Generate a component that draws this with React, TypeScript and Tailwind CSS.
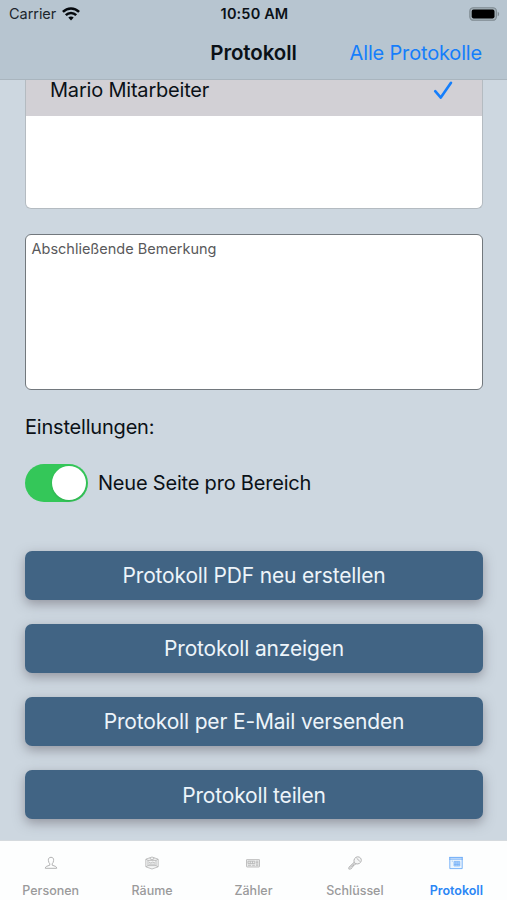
import { useState } from "react";

const actions = [
  "Protokoll PDF neu erstellen",
  "Protokoll anzeigen",
  "Protokoll per E-Mail versenden",
  "Protokoll teilen",
];

const tabs = [
  { label: "Personen", icon: <PersonIcon /> },
  { label: "Räume", icon: <RoomIcon /> },
  { label: "Zähler", icon: <MeterIcon /> },
  { label: "Schlüssel", icon: <KeyIcon /> },
  { label: "Protokoll", icon: <ProtocolIcon /> },
];

function PersonIcon() {
  return (
    <svg width="14" height="14" viewBox="0 0 14 14" fill="none" stroke="currentColor" strokeWidth="1">
      <path d="M7 1.3C5 1.3 4.2 2.6 4.4 4.4C4.5 6 5.1 7.1 5.8 7.8V9.2L2.7 10.3C1.8 10.6 1.4 11.3 1.3 12.3H12.7C12.6 11.3 12.2 10.6 11.3 10.3L8.2 9.2V7.8C8.9 7.1 9.5 6 9.6 4.4C9.8 2.6 9 1.3 7 1.3Z" />
    </svg>
  );
}

function RoomIcon() {
  return (
    <svg width="14" height="14" viewBox="0 0 14 14" fill="none" stroke="currentColor" strokeWidth="0.8">
      <path d="M0.8 3.2L7 1L13.2 3.2V10.8L7 13L0.8 10.8Z" fill="currentColor" fillOpacity="0.12" />
      <path d="M1 3.2L3 4.4H11L13 3.2M3 4.4V9.6H11V4.4M1 10.8L3 9.6M13 10.8L11 9.6M5.2 1.8V3L7 3.8L8.8 3V1.8" />
      <path d="M4 6.2L5.8 7L7.8 6.1L10 7M4 8.2H10" />
    </svg>
  );
}

function MeterIcon() {
  return (
    <svg width="14" height="14" viewBox="0 0 14 14" fill="none" stroke="currentColor" strokeWidth="0.8">
      <rect x="0.5" y="3.4" width="13" height="7.6" rx="0.6" fill="currentColor" fillOpacity="0.25" />
      <path d="M2 5.2H8.8V7.6H2ZM4.3 5.2V7.6M6.5 5.2V7.6M10 5.2H12.3M10 6.6H12.3M10 8H12.3M2 9.3H5M6.2 9.3H8.8M10 9.3H12.3" />
    </svg>
  );
}

function KeyIcon() {
  return (
    <svg width="14" height="14" viewBox="0 0 14 14" fill="none" stroke="currentColor" strokeWidth="1">
      <path d="M6.1 6.3C5.4 3.5 7 1 9.6 0.8C12 0.7 13.5 2.6 13.3 4.6C13 7 10.5 8.5 7.9 7.8L6.8 8.9L5.6 9L5.4 10.2L4.2 10.5L4 11.8L2.8 13L0.9 13.1L0.8 11.4Z" fill="currentColor" fillOpacity="0.12" />
      <path d="M6.1 6.3L7.9 7.8M1.8 11.8L6.3 7.3M8.6 2.2L11.8 5.3" />
    </svg>
  );
}

function ProtocolIcon() {
  return (
    <svg width="14" height="14" viewBox="0 0 14 14" fill="none" stroke="currentColor" strokeWidth="0.9">
      <path d="M0.2 1.4H13.8M0.2 3.1H13.8" />
      <path d="M0.8 1.4V12.6H13.2V1.4" strokeWidth="0.8" fill="currentColor" fillOpacity="0.1" />
      <path d="M5 5.4H10.8V10H5ZM5 7H10.8M5 8.5H10.8M6.9 5.4V10M8.9 5.4V10M2.8 5.2H3.8" strokeWidth="0.6" fill="currentColor" fillOpacity="0.15" />
    </svg>
  );
}

function WifiIcon() {
  return (
    <svg width="18" height="14" viewBox="0 0 18 14" fill="none" stroke="#05090d" strokeWidth="2.5">
      <path d="M0.9 4.9C5.5 0.3 12.5 0.3 17.1 4.9" />
      <path d="M3.8 8.1C6.7 5.2 11.3 5.2 14.2 8.1" />
      <path d="M9 13.4L6.3 10.6C7.8 9.2 10.2 9.2 11.7 10.6Z" fill="#05090d" stroke="none" />
    </svg>
  );
}

function BatteryIcon() {
  return (
    <svg width="31" height="14" viewBox="0 0 31 14">
      <rect x="0.8" y="0.7" width="26.6" height="12.6" rx="3.6" fill="#a3b0b8" stroke="#7f8a91" strokeWidth="1.1" />
      <rect x="2.7" y="2.6" width="22.8" height="8.8" rx="1.8" fill="#000" />
      <path d="M28.7 4.7C30.6 5.4 30.6 8.6 28.7 9.3Z" fill="#7f8a91" />
    </svg>
  );
}

export default function App() {
  const [newPage, setNewPage] = useState(true);
  const [activeTab, setActiveTab] = useState("Protokoll");

  return (
    <div className="flex h-[900px] w-[507px] flex-col overflow-hidden bg-[#cdd7e0] font-['Inter',sans-serif] text-[#0b1117]">
      {/* Status bar + navigation */}
      <header className="h-20 shrink-0 border-b border-[#a9b5be] bg-[#b7c5d0]">
        <div className="grid h-[27px] grid-cols-3 items-center pr-[7px] pl-[9px] text-[14.5px]">
          <div className="flex items-center gap-[6px]">
            <span className="tracking-[-0.05px] text-[#1c252c]">Carrier</span>
            <WifiIcon />
          </div>
          <span className="text-center font-semibold tracking-[0.15px] whitespace-nowrap">10:50 AM</span>
          <div className="flex justify-end">
            <BatteryIcon />
          </div>
        </div>
        <div className="grid h-[52px] grid-cols-[1fr_auto_1fr] items-center px-[25px]">
          <span />
          <h1 className="text-[20.5px] font-semibold tracking-[-0.1px]">Protokoll</h1>
          <button className="text-right text-[20px] tracking-[-0.17px] whitespace-nowrap text-[#157efb]">Alle Protokolle</button>
        </div>
      </header>

      <main className="flex flex-1 flex-col pr-[24px] pl-[25px]">
        {/* Employee list */}
        <div className="h-[129px] shrink-0 rounded-b-[6px] border border-t-0 border-[#b4bbc1] bg-white">
          <div className="flex h-[36px] items-start justify-between bg-[#d2d0d5] pr-[29px] pl-[24px]">
            <span className="text-[20px] leading-5 tracking-[-0.2px]">Mario Mitarbeiter</span>
            <svg width="20" height="20" viewBox="0 0 20 20" fill="none" stroke="#157efb" strokeWidth="2.6" strokeLinecap="round" strokeLinejoin="round">
              <path d="M2.2 11.2L7.8 17.6L18 2.8" />
            </svg>
          </div>
        </div>

        <div className="mt-[25px] h-[156px] shrink-0 rounded-[6px] border border-[#72787d] bg-white px-[5.5px] py-1 text-[14.5px] leading-5 text-[#59595b]">
          Abschließende Bemerkung
        </div>

        <h2 className="mt-[23px] text-[20px] leading-7 tracking-[-0.2px]">Einstellungen:</h2>

        <div className="mt-[23px] flex h-[38px] items-center gap-[10px]">
          <button
            role="switch"
            aria-checked={newPage}
            aria-label="Neue Seite pro Bereich"
            className={`flex h-[38px] w-[63px] items-center rounded-full p-[2px] ${newPage ? "justify-end bg-[#34c759]" : "bg-gray-300"}`}
            onClick={() => setNewPage(!newPage)}
          >
            <span className="h-[34px] w-[34px] rounded-full bg-white shadow-sm" />
          </button>
          <span className="text-[20px] tracking-[-0.2px]">Neue Seite pro Bereich</span>
        </div>

        <div className="mt-[48.5px] flex flex-col gap-[24.3px]">
          {actions.map((label) => (
            <button
              key={label}
              className="h-[49px] rounded-[7px] bg-[#416484] pt-px text-[21px] tracking-[-0.16px] text-[#edf4fa] shadow-[0_4px_12px_rgba(90,85,95,0.5)]"
            >
              {label}
            </button>
          ))}
        </div>
      </main>

      {/* Tab bar */}
      <nav className="grid h-[60px] shrink-0 grid-cols-5 border-t border-[#d5dade] bg-[#fdfefe]">
        {tabs.map((tab) => (
          <button
            key={tab.label}
            className={`flex flex-col items-center pt-[15px] text-[12.5px] ${activeTab === tab.label ? "font-semibold text-[#2a86f5]" : "font-medium text-[#9a9a9b]"}`}
            onClick={() => setActiveTab(tab.label)}
          >
            <span className="h-[14px] opacity-75">{tab.icon}</span>
            <span className="mt-[12px] leading-[18px]">{tab.label}</span>
          </button>
        ))}
      </nav>
    </div>
  );
}
